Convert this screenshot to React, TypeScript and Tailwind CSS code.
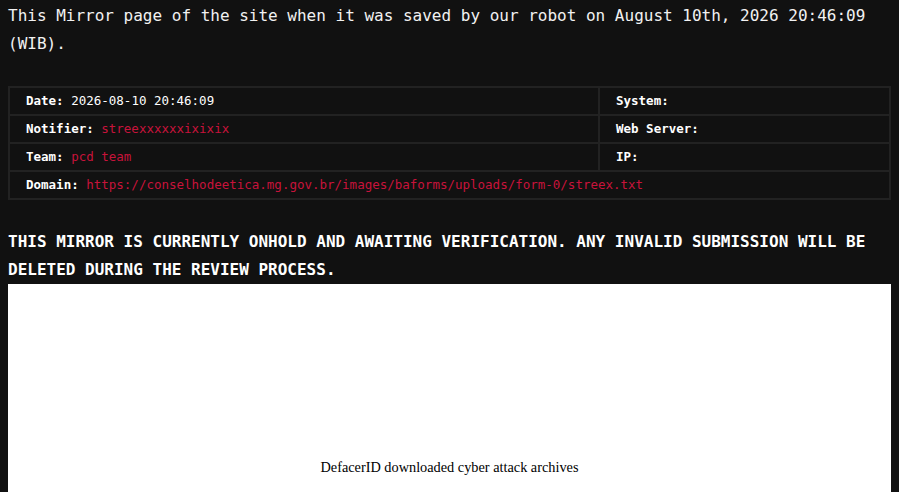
const rows = [
  { left: ["Date:", "2026-08-10 20:46:09", false], right: "System:" },
  { left: ["Notifier:", "streexxxxxxixixix", true], right: "Web Server:" },
  { left: ["Team:", "pcd team", true], right: "IP:" },
] as const;

export default function App() {
  return (
    <div className="min-h-screen bg-[#111111] px-2 pt-[2px] text-white font-['DejaVu_Sans_Mono','Liberation_Mono',monospace]">
      <p className="text-[16px] leading-[28px] text-[#f2f2f2]">
        This Mirror page of the site when it was saved by our robot on August 10th, 2026 20:46:09 (WIB).
      </p>

      <table className="mt-[28px] w-full border-collapse border-2 border-[#222222] text-[12.5px]">
        <tbody>
          {rows.map((row) => (
            <tr key={row.right} className="h-[28px]">
              <td className="w-[590px] border-2 border-[#222222] pl-[16px]">
                <span className="font-bold">{row.left[0]}</span>{" "}
                <span className={row.left[2] ? "text-[#c8133b]" : "text-white"}>{row.left[1]}</span>
              </td>
              <td className="border-2 border-[#222222] pl-[16px] font-bold">{row.right}</td>
            </tr>
          ))}
          <tr className="h-[28px]">
            <td colSpan={2} className="border-2 border-[#222222] pl-[16px]">
              <span className="font-bold">Domain:</span>{" "}
              <span className="text-[#c8133b]">https://conselhodeetica.mg.gov.br/images/baforms/uploads/form-0/streex.txt</span>
            </td>
          </tr>
        </tbody>
      </table>

      <h2 className="mt-[28px] text-[16px] font-bold leading-[28px]">
        THIS MIRROR IS CURRENTLY ONHOLD AND AWAITING VERIFICATION. ANY INVALID SUBMISSION WILL BE DELETED DURING THE REVIEW PROCESS.
      </h2>

      <div className="h-[300px] bg-white pt-[173px] text-center font-['Liberation_Serif',serif] text-[14.3px] text-black">
        DefacerID downloaded cyber attack archives
      </div>
    </div>
  );
}
